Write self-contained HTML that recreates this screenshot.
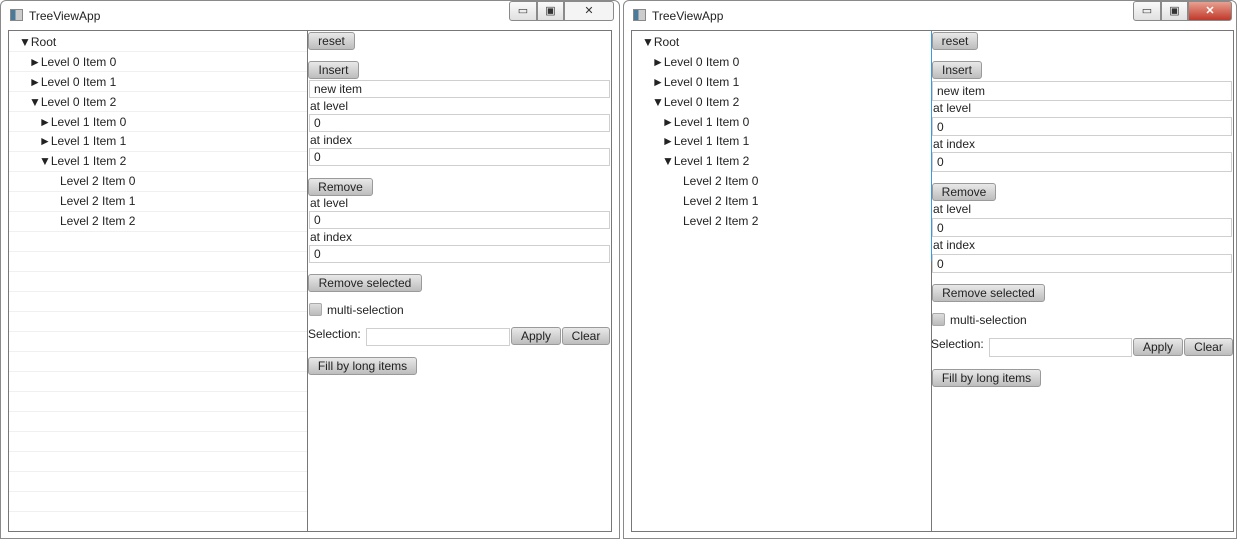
<!DOCTYPE html>
<html><head><meta charset="utf-8"><style>
*{margin:0;padding:0;box-sizing:border-box}
body{width:1237px;height:539px;background:#fff;position:relative;overflow:hidden;font-family:"Liberation Sans",sans-serif;font-size:12px;color:#222}
.a{position:absolute}
.win{border:1px solid #8a8a8a;border-radius:6px 6px 0 0;background:#fff}
.t{white-space:nowrap;line-height:14px}
.btn{position:absolute;height:18px;border:1px solid #9a9a9a;border-radius:3px;background:linear-gradient(#e8e8e8,#bdbdbd);text-align:center;line-height:16px;font-size:12px;color:#222}
.inp{position:absolute;border:1px solid #cfcfcf;background:#fff;padding-left:4px;line-height:16px}
.row{position:absolute;height:1px;background:#f0f0f0}
.cb{position:absolute;width:13px;height:13px;border:1px solid #aaa;background:linear-gradient(#ddd,#bbb);border-radius:2px}
.ctl{position:absolute;top:1px;height:20px;border:1px solid #8a8a8a;background:linear-gradient(#fafafa,#e0e0e0);text-align:center;font-size:11px;line-height:18px;color:#333}
</style></head><body>

<!-- LEFT WINDOW -->
<div class="a win" style="left:0;top:0;width:620px;height:539px"></div>
<div class="a" style="left:10px;top:9px;width:13px;height:12px;background:linear-gradient(90deg,#4a7a9a 40%,#ccc 40%);border:1px solid #888"></div>
<div class="a t" style="left:29px;top:9px;font-size:12px">TreeViewApp</div>
<div class="ctl" style="left:509px;width:28px;border-radius:3px 0 0 3px">▭</div>
<div class="ctl" style="left:537px;width:27px">▣</div>
<div class="ctl" style="left:564px;width:50px;border-radius:0 3px 3px 0;background:#f4f4f4">✕</div>
<div class="a" style="left:8px;top:30px;width:604px;height:502px;border:1px solid #777"></div>
<div class="a" style="left:307px;top:31px;width:1px;height:500px;background:#777"></div>
<div class="row" style="left:9px;top:51px;width:298px"></div>
<div class="row" style="left:9px;top:71px;width:298px"></div>
<div class="row" style="left:9px;top:91px;width:298px"></div>
<div class="row" style="left:9px;top:111px;width:298px"></div>
<div class="row" style="left:9px;top:131px;width:298px"></div>
<div class="row" style="left:9px;top:151px;width:298px"></div>
<div class="row" style="left:9px;top:171px;width:298px"></div>
<div class="row" style="left:9px;top:191px;width:298px"></div>
<div class="row" style="left:9px;top:211px;width:298px"></div>
<div class="row" style="left:9px;top:231px;width:298px"></div>
<div class="row" style="left:9px;top:251px;width:298px"></div>
<div class="row" style="left:9px;top:271px;width:298px"></div>
<div class="row" style="left:9px;top:291px;width:298px"></div>
<div class="row" style="left:9px;top:311px;width:298px"></div>
<div class="row" style="left:9px;top:331px;width:298px"></div>
<div class="row" style="left:9px;top:351px;width:298px"></div>
<div class="row" style="left:9px;top:371px;width:298px"></div>
<div class="row" style="left:9px;top:391px;width:298px"></div>
<div class="row" style="left:9px;top:411px;width:298px"></div>
<div class="row" style="left:9px;top:431px;width:298px"></div>
<div class="row" style="left:9px;top:451px;width:298px"></div>
<div class="row" style="left:9px;top:471px;width:298px"></div>
<div class="row" style="left:9px;top:491px;width:298px"></div>
<div class="row" style="left:9px;top:511px;width:298px"></div>
<div class="a t" style="left:19px;top:35px">▼Root</div>
<div class="a t" style="left:29px;top:55px">►Level 0 Item 0</div>
<div class="a t" style="left:29px;top:75px">►Level 0 Item 1</div>
<div class="a t" style="left:29px;top:95px">▼Level 0 Item 2</div>
<div class="a t" style="left:39px;top:115px">►Level 1 Item 0</div>
<div class="a t" style="left:39px;top:134px">►Level 1 Item 1</div>
<div class="a t" style="left:39px;top:154px">▼Level 1 Item 2</div>
<div class="a t" style="left:60px;top:174px">Level 2 Item 0</div>
<div class="a t" style="left:60px;top:194px">Level 2 Item 1</div>
<div class="a t" style="left:60px;top:214px">Level 2 Item 2</div>

<div class="btn" style="left:308px;top:32px;width:47px">reset</div>
<div class="btn" style="left:308px;top:61px;width:51px">Insert</div>
<div class="inp" style="left:309px;top:80px;width:301px;height:18px">new item</div>
<div class="a t" style="left:310px;top:99px">at level</div>
<div class="inp" style="left:309px;top:114px;width:301px;height:18px">0</div>
<div class="a t" style="left:310px;top:133px">at index</div>
<div class="inp" style="left:309px;top:148px;width:301px;height:18px">0</div>
<div class="btn" style="left:308px;top:178px;width:65px">Remove</div>
<div class="a t" style="left:310px;top:196px">at level</div>
<div class="inp" style="left:309px;top:211px;width:301px;height:18px">0</div>
<div class="a t" style="left:310px;top:230px">at index</div>
<div class="inp" style="left:309px;top:245px;width:301px;height:18px">0</div>
<div class="btn" style="left:308px;top:274px;width:114px">Remove selected</div>
<div class="cb" style="left:309px;top:303px"></div>
<div class="a t" style="left:327px;top:303px">multi-selection</div>
<div class="a t" style="left:308px;top:327px">Selection:</div>
<div class="inp" style="left:366px;top:328px;width:144px;height:18px"></div>
<div class="btn" style="left:511px;top:327px;width:50px">Apply</div>
<div class="btn" style="left:562px;top:327px;width:48px">Clear</div>
<div class="btn" style="left:308px;top:357px;width:109px">Fill by long items</div>

<!-- RIGHT WINDOW -->
<div class="a win" style="left:623px;top:0;width:614px;height:539px"></div>
<div class="a" style="left:633px;top:9px;width:13px;height:12px;background:linear-gradient(90deg,#4a7a9a 40%,#ccc 40%);border:1px solid #888"></div>
<div class="a t" style="left:652px;top:9px">TreeViewApp</div>
<div class="ctl" style="left:1133px;width:28px;border-radius:3px 0 0 3px">▭</div>
<div class="ctl" style="left:1161px;width:27px">▣</div>
<div class="ctl" style="left:1188px;width:44px;border-radius:0 3px 3px 0;background:linear-gradient(#e8a090,#c0392b);color:#fff;font-weight:bold">✕</div>
<div class="a" style="left:631px;top:30px;width:603px;height:502px;border:1px solid #777"></div>
<div class="a" style="left:931px;top:31px;width:1px;height:500px;background:#777"></div>
<div class="a" style="left:931px;top:31px;width:1px;height:230px;background:#3a9be0"></div>
<div class="a t" style="left:642px;top:35px">▼Root</div>
<div class="a t" style="left:652px;top:55px">►Level 0 Item 0</div>
<div class="a t" style="left:652px;top:75px">►Level 0 Item 1</div>
<div class="a t" style="left:652px;top:95px">▼Level 0 Item 2</div>
<div class="a t" style="left:662px;top:115px">►Level 1 Item 0</div>
<div class="a t" style="left:662px;top:134px">►Level 1 Item 1</div>
<div class="a t" style="left:662px;top:154px">▼Level 1 Item 2</div>
<div class="a t" style="left:683px;top:174px">Level 2 Item 0</div>
<div class="a t" style="left:683px;top:194px">Level 2 Item 1</div>
<div class="a t" style="left:683px;top:214px">Level 2 Item 2</div>

<div class="btn" style="left:932px;top:32px;width:46px">reset</div>
<div class="btn" style="left:932px;top:61px;width:50px">Insert</div>
<div class="inp" style="left:932px;top:81px;width:300px;height:20px;line-height:18px">new item</div>
<div class="a t" style="left:933px;top:101px">at level</div>
<div class="inp" style="left:932px;top:117px;width:300px;height:19px;line-height:18px">0</div>
<div class="a t" style="left:933px;top:137px">at index</div>
<div class="inp" style="left:932px;top:152px;width:300px;height:20px;line-height:18px">0</div>
<div class="btn" style="left:932px;top:183px;width:64px">Remove</div>
<div class="a t" style="left:933px;top:202px">at level</div>
<div class="inp" style="left:932px;top:218px;width:300px;height:19px;line-height:18px">0</div>
<div class="a t" style="left:933px;top:238px">at index</div>
<div class="inp" style="left:932px;top:254px;width:300px;height:19px;line-height:18px">0</div>
<div class="btn" style="left:932px;top:284px;width:113px">Remove selected</div>
<div class="cb" style="left:932px;top:313px"></div>
<div class="a t" style="left:950px;top:313px">multi-selection</div>
<div class="a t" style="left:931px;top:337px">Selection:</div>
<div class="inp" style="left:989px;top:338px;width:143px;height:19px"></div>
<div class="btn" style="left:1133px;top:338px;width:50px">Apply</div>
<div class="btn" style="left:1184px;top:338px;width:49px">Clear</div>
<div class="btn" style="left:932px;top:369px;width:109px">Fill by long items</div>
</body></html>
